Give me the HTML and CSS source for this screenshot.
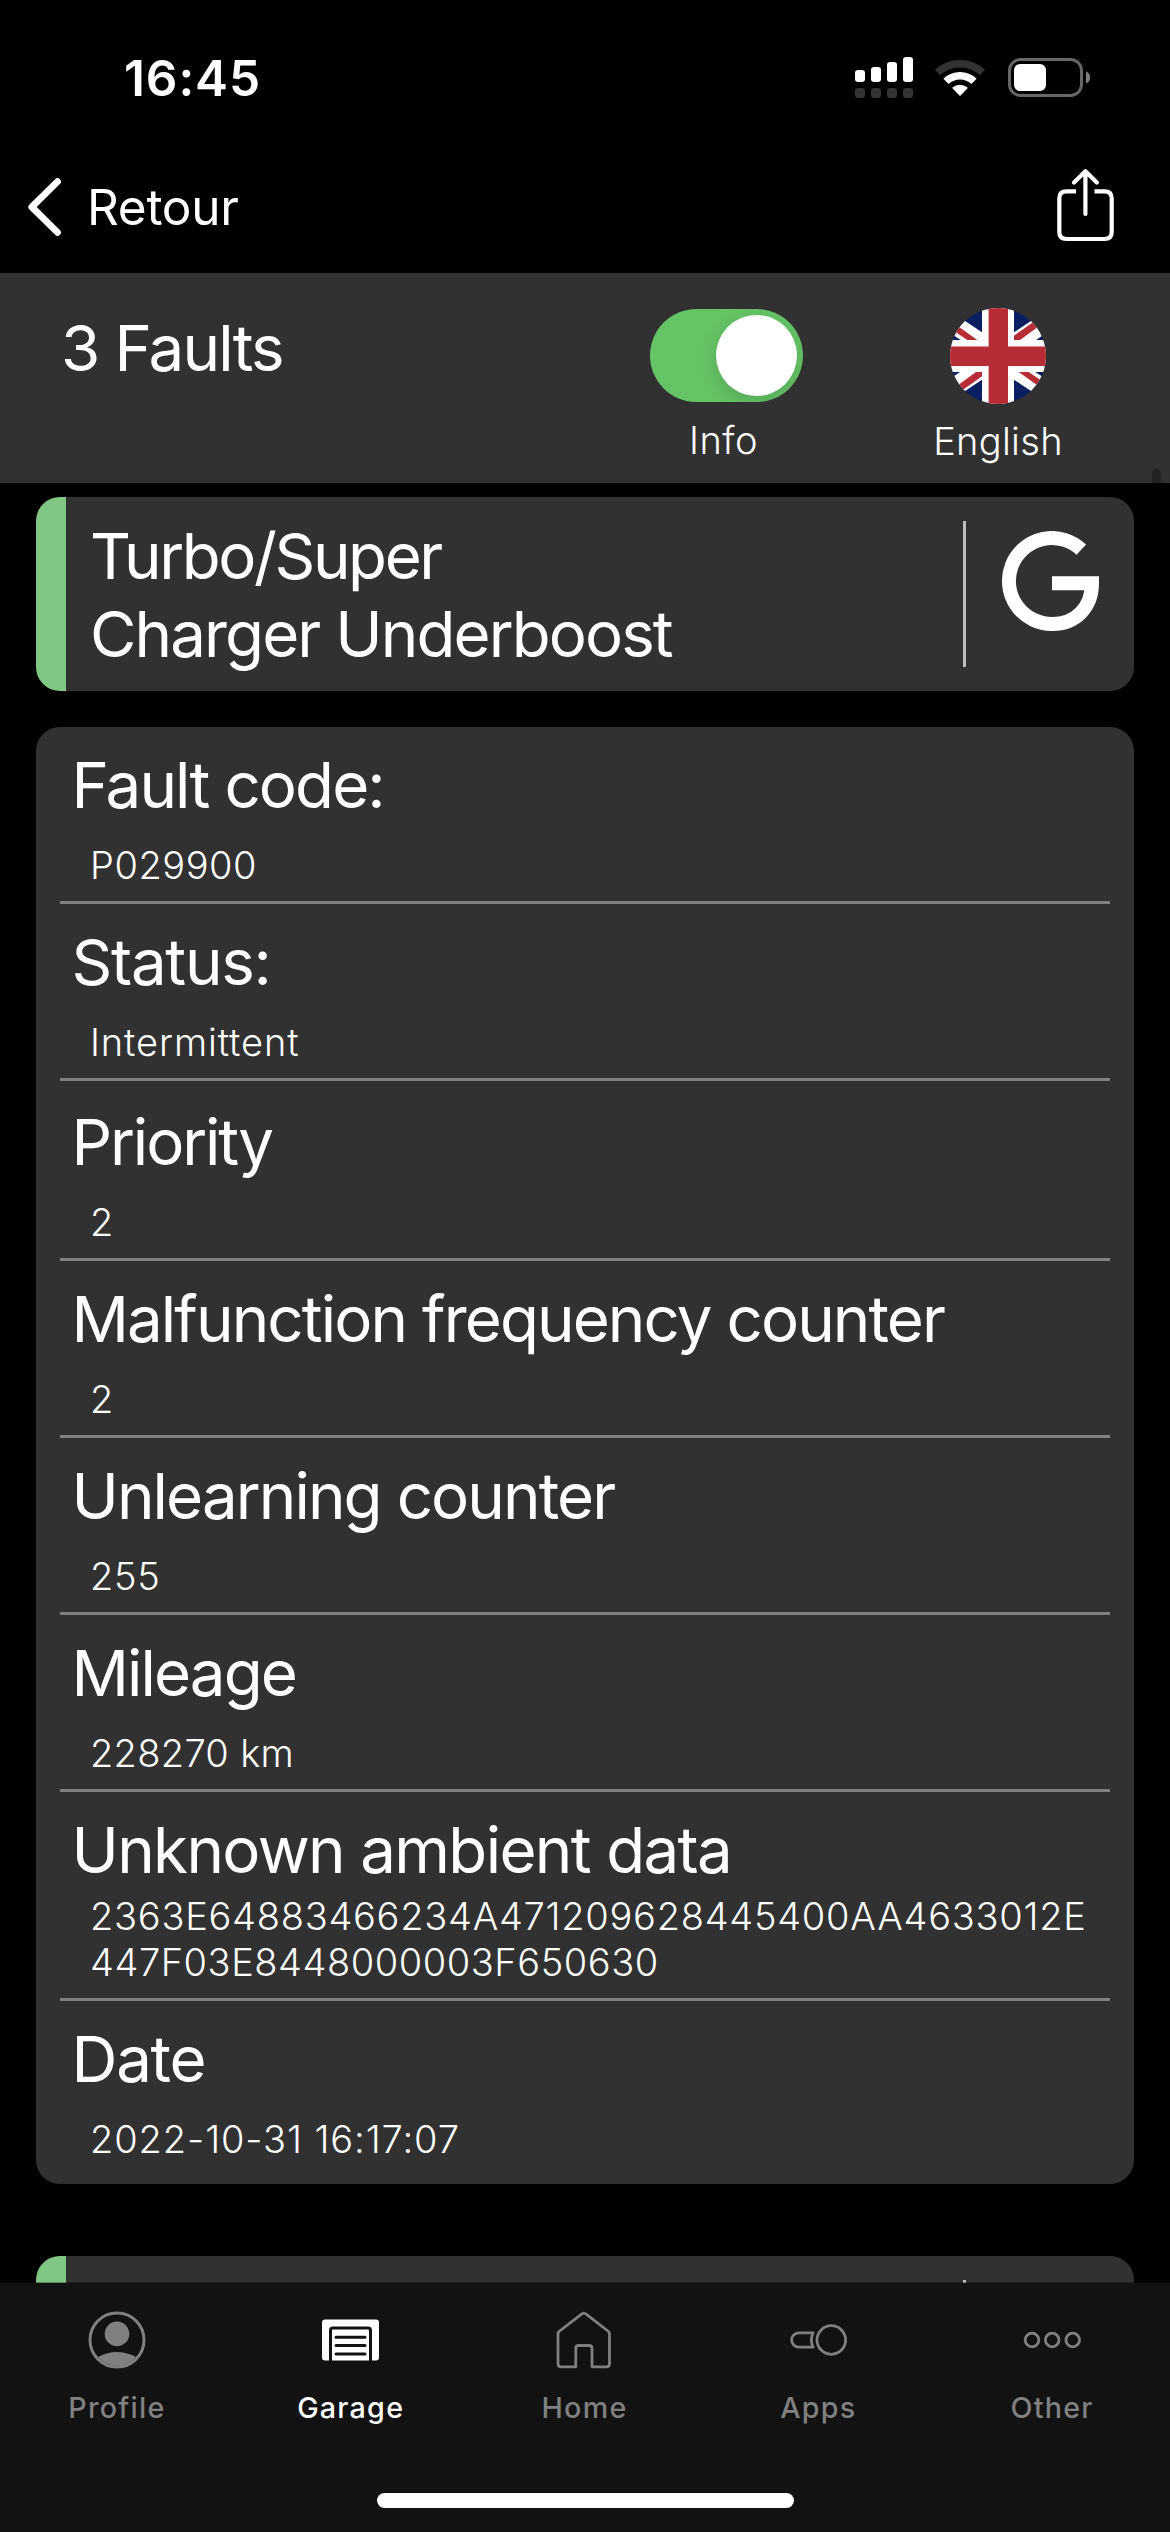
FILE: index.html
```html
<!DOCTYPE html>
<html lang="en">
<head>
<meta charset="utf-8">
<title>Faults</title>
<link rel="stylesheet" href="styles.css">
</head>
<body>
<div class="screen">
  <header class="status">
    <span class="clock">16:45</span>
    <div class="status-icons">
      <svg class="signal" width="58" height="42" viewBox="0 0 58 42">
        <g fill="#fff"><rect x="0" y="13" width="10" height="12" rx="3"/><rect x="16" y="10" width="10" height="15" rx="3"/><rect x="32" y="5" width="10" height="20" rx="3"/><rect x="48" y="0" width="10" height="25" rx="3"/></g>
        <g fill="#333"><rect x="0" y="31" width="10" height="10" rx="3"/><rect x="16" y="31" width="10" height="10" rx="3"/><rect x="32" y="31" width="10" height="10" rx="3"/><rect x="48" y="31" width="10" height="10" rx="3"/></g>
      </svg>
      <svg class="wifi" width="51" height="38" viewBox="0 0 51 38" fill="none">
        <path d="M2.5 13.5A33 33 0 0 1 47.5 13.5" stroke="#333" stroke-width="7.5"/>
        <path d="M11 22.4A20.3 20.3 0 0 1 39 22.4" stroke="#fff" stroke-width="7.5"/>
        <path d="M25 36L18.2 28.9A10.6 10.6 0 0 1 31.8 28.9Z" fill="#fff" stroke="#fff" stroke-width="1.5" stroke-linejoin="round"/>
      </svg>
      <svg class="battery" width="83" height="39" viewBox="0 0 83 39">
        <rect x="1.5" y="1.5" width="72" height="36" rx="11" fill="none" stroke="#666" stroke-width="3"/>
        <rect x="6" y="6" width="32" height="27" rx="6" fill="#fff"/>
        <path d="M78 13.5a6.5 6.5 0 0 1 0 12z" fill="#808080"/>
      </svg>
    </div>
  </header>
  <nav class="navbar">
    <a class="back">
      <svg width="34" height="58" viewBox="0 0 34 58"><path d="M29.5 3.7L3.8 29L29.5 54.3" fill="none" stroke="#fff" stroke-width="6.8" stroke-linecap="round" stroke-linejoin="round"/></svg>
      <span>Retour</span>
    </a>
    <svg class="share" width="58" height="73" viewBox="0 0 58 73" fill="none" stroke="#fff" stroke-width="4.2" stroke-linecap="butt" stroke-linejoin="round">
      <path d="M19 22.3H9.5Q2.3 22.3 2.3 29.5V63Q2.3 70 9.5 70H47.5Q54.7 70 54.7 63V29.5Q54.7 22.3 47.5 22.3H37.5"/>
      <path d="M28.4 2.5V45M17 13.5L28.4 2.3L39.8 13.5" stroke-linecap="round"/>
    </svg>
  </nav>
  <section class="summary">
    <h1 class="count">3 Faults</h1>
    <div class="option info">
      <div class="toggle"><span class="knob"></span></div>
      <span class="option-label">Info</span>
    </div>
    <div class="option language">
      <svg class="flag" width="96" height="96" viewBox="0 0 96 96">
        <clipPath id="round"><circle cx="48" cy="48" r="48"/></clipPath>
        <g clip-path="url(#round)">
          <rect width="96" height="96" fill="#0a1f62"/>
          <g id="upper">
            <path d="M0 3L32 24.3V32H10.7L0 24.9ZM64 24.3L96 3V25.3L86 32H64Z" fill="#fff"/>
            <path d="M27.3 32H17.3L0 20.3V12.6ZM64 27.7L96 5V13L70 32H64Z" fill="#b72d36"/>
          </g>
          <use href="#upper" transform="rotate(180 48 48)"/>
          <path d="M32 0H64V32H96V64H64V96H32V64H0V32H32Z" fill="#fff"/>
          <path d="M38.6 0H58V38.6H96V58H58V96H38.6V58H0V38.6H38.6Z" fill="#b72d36"/>
        </g>
      </svg>
      <span class="option-label">English</span>
    </div>
    <span class="scrollbar"></span>
  </section>
  <main class="list">
    <article class="fault">
      <h2 class="fault-name"><span class="first">Turbo/Super</span><br>Charger Underboost</h2>
      <a class="search">
        <svg width="100" height="101" viewBox="0 0 100 101"><path d="M80.3 18.6A43 43 0 1 0 51 93C75 93 91 76 91 52.3H51" fill="none" stroke="#fff" stroke-width="14"/></svg>
      </a>
    </article>
    <dl class="details">
      <div class="row"><dt>Fault code:</dt><dd class="tight">P029900</dd></div>
      <div class="row"><dt class="loose">Status:</dt><dd class="wide">Intermittent</dd></div>
      <div class="row spaced"><dt class="narrow">Priority</dt><dd>2</dd></div>
      <div class="row"><dt>Malfunction frequency counter</dt><dd>2</dd></div>
      <div class="row"><dt>Unlearning counter</dt><dd>255</dd></div>
      <div class="row"><dt>Mileage</dt><dd class="mileage">228270 km</dd></div>
      <div class="row long"><dt class="medium">Unknown ambient data</dt><dd>2363E64883466234A471209628445400AA4633012E<br><span class="tight">447F03E8448000003F650630</span></dd></div>
      <div class="row"><dt class="loose">Date</dt><dd class="wide">2022-10-31 16:17:07</dd></div>
    </dl>
    <article class="fault next"><span class="search"></span></article>
  </main>
  <footer class="tabbar">
    <div class="tabs">
      <a class="tab">
        <svg width="60" height="60" viewBox="0 0 60 60"><circle cx="30" cy="30" r="27" fill="none" stroke="currentColor" stroke-width="3"/><circle cx="30" cy="23.9" r="12.3" fill="currentColor"/><path d="M11 47Q30 37 49 47A25.2 25.2 0 0 1 11 47Z" fill="currentColor"/></svg>
        <span>Profile</span>
      </a>
      <a class="tab active">
        <svg width="60" height="60" viewBox="0 0 60 60"><rect x="1" y="9.5" width="57" height="41" rx="3" fill="currentColor"/><path d="M9.5 51V20.5Q9.5 18 12 18H47Q49.5 18 49.5 20.5V51" fill="none" stroke="#121212" stroke-width="3"/><path d="M15 27.2H44M15 35.6H44M15 44H44" stroke="#121212" stroke-width="3" stroke-linecap="round"/></svg>
        <span>Garage</span>
      </a>
      <a class="tab home">
        <svg width="60" height="60" viewBox="0 0 60 60" fill="none" stroke="currentColor" stroke-width="2.8" stroke-linejoin="round"><path d="M27.5 4.2Q29.8 2 32.2 4.2L54.5 21.5Q55.5 22.5 55.5 24V53.5Q55.5 56.8 52.5 56.8H38V38.5Q38 35.5 35 35.5H24.5Q21.8 35.5 21.8 38.5V56.8H7Q4 56.8 4 53.5V24Q4 22.5 5 21.5Z"/></svg>
        <span>Home</span>
      </a>
      <a class="tab apps">
        <svg width="60" height="60" viewBox="0 0 60 60" fill="none" stroke="currentColor" stroke-width="2.8" stroke-linejoin="round"><path d="M25 22.8H10.8A7.2 7.2 0 0 0 10.8 37.2H25Q21.7 30 25 22.8Z"/><circle cx="43.3" cy="30" r="14.3"/></svg>
        <span>Apps</span>
      </a>
      <a class="tab">
        <svg width="60" height="60" viewBox="0 0 60 60" fill="none" stroke="currentColor" stroke-width="2.8"><circle cx="10" cy="30" r="6.8"/><circle cx="30.2" cy="30" r="6.8"/><circle cx="50.7" cy="30" r="6.8"/></svg>
        <span>Other</span>
      </a>
    </div>
    <div class="home-indicator"></div>
  </footer>
</div>
</body>
</html>
```
FILE: styles.css
```css
* { box-sizing: border-box; margin: 0; padding: 0; }

body {
  background: #000;
  color: #fff;
  font-family: Inter, "Liberation Sans", sans-serif;
}

svg { display: block; flex: none; }

.screen {
  width: 1170px;
  height: 2532px;
  display: flex;
  flex-direction: column;
  overflow: hidden;
}

/* Status bar */
.status {
  height: 155px;
  padding: 48px 79px 0 124px;
  display: flex;
  justify-content: space-between;
}
.clock { font-size: 49.5px; line-height: 60px; font-weight: 600; letter-spacing: 0.9px; }
.status-icons { display: flex; align-items: flex-start; }
.signal { margin-top: 9px; }
.wifi { margin: 11px 22px 0; }
.battery { margin-top: 10px; }

/* Navigation bar */
.navbar {
  height: 118px;
  padding: 0 55px 0 28px;
  display: flex;
  justify-content: space-between;
  align-items: flex-start;
}
.back { display: flex; align-items: center; gap: 25px; margin-top: 22px; }
.back span { font-size: 49.5px; line-height: 60px; letter-spacing: -0.3px; }
.share { margin-top: 14px; }

/* Summary panel */
.summary {
  position: relative;
  height: 210px;
  padding: 36px 36px 0 61px;
  display: flex;
  background: #313131;
  overflow: hidden;
}
.count {
  flex: 1;
  font-size: 63.6px;
  line-height: 78px;
  font-weight: 400;
  letter-spacing: -1.85px;
}
.option { width: 272px; display: flex; flex-direction: column; align-items: center; }
.option.language { margin-top: -1px; }
.option-label { font-size: 38px; line-height: 46px; font-weight: 300; margin-top: 15px; }
.info .option-label { padding-right: 5px; letter-spacing: 0.5px; }
.language .option-label { margin-top: 14px; letter-spacing: 0.3px; }
.toggle {
  width: 153px;
  height: 93px;
  padding: 6px;
  display: flex;
  justify-content: flex-end;
  border-radius: 47px;
  background: #65c466;
  overflow: hidden;
}
.knob {
  width: 81px;
  height: 81px;
  border-radius: 50%;
  background: #fff;
  box-shadow: 0 6px 20px rgba(0, 0, 0, 0.15);
}
.scrollbar {
  position: absolute;
  left: 1152px;
  top: 196px;
  width: 9px;
  height: 30px;
  border-radius: 5px;
  background: #222;
}

/* Fault list */
.list { height: 1800px; padding: 14px 36px 0; overflow: hidden; }
.fault {
  height: 194px;
  padding: 20px 0 0 24px;
  display: flex;
  justify-content: space-between;
  border-left: 30px solid #81c784;
  border-radius: 24px;
  background: #313131;
}
.fault-name {
  font-size: 63.6px;
  line-height: 78px;
  font-weight: 400;
  letter-spacing: -1.9px;
  white-space: nowrap;
}
.first { letter-spacing: -2.4px; }
.search {
  width: 171px;
  height: 146px;
  margin-top: 4px;
  padding: 10px 0 0 35px;
  border-left: 3px solid #bdbdbd;
}
.next { margin-top: 72px; justify-content: flex-end; }

.details {
  margin-top: 36px;
  padding: 0 24px 9px;
  border-radius: 24px;
  background: #313131;
}
.row { padding: 19px 0 13px; border-bottom: 3px solid #808080; }
.row:last-child { border-bottom: 0; }
.spaced { padding-top: 22px; }
dt {
  padding-left: 11.5px;
  font-size: 63.6px;
  line-height: 78px;
  letter-spacing: -1.9px;
  white-space: nowrap;
}
dt.loose { letter-spacing: -1.26px; }
dt.medium { letter-spacing: -1.64px; }
dt.narrow { letter-spacing: -2.1px; }
dd {
  margin-top: 18px;
  padding-left: 30px;
  font-size: 38px;
  line-height: 46px;
  font-weight: 300;
  letter-spacing: 0.73px;
  white-space: nowrap;
}
.long dd { margin-top: 4px; }
.tight { letter-spacing: 0.54px; }
dd.wide { letter-spacing: 0.9px; }
dd.mileage { letter-spacing: 0.3px; }

/* Tab bar */
.tabbar { height: 249px; background: #121212; box-shadow: 0 -1px 0 rgba(0, 0, 0, 0.3); position: relative; }
.tabs { display: flex; padding: 27px 1px 0 0; }
.tab {
  flex: 1;
  display: flex;
  flex-direction: column;
  align-items: center;
  gap: 20px;
  color: #808080;
  font-size: 28.7px;
  line-height: 36px;
  font-weight: 500;
  letter-spacing: 1.25px;
}
.tab.active { color: #fff; }
.home-indicator { width: 417px; height: 15px; margin: 67px auto 0; border-radius: 8px; background: #fff; }
```
